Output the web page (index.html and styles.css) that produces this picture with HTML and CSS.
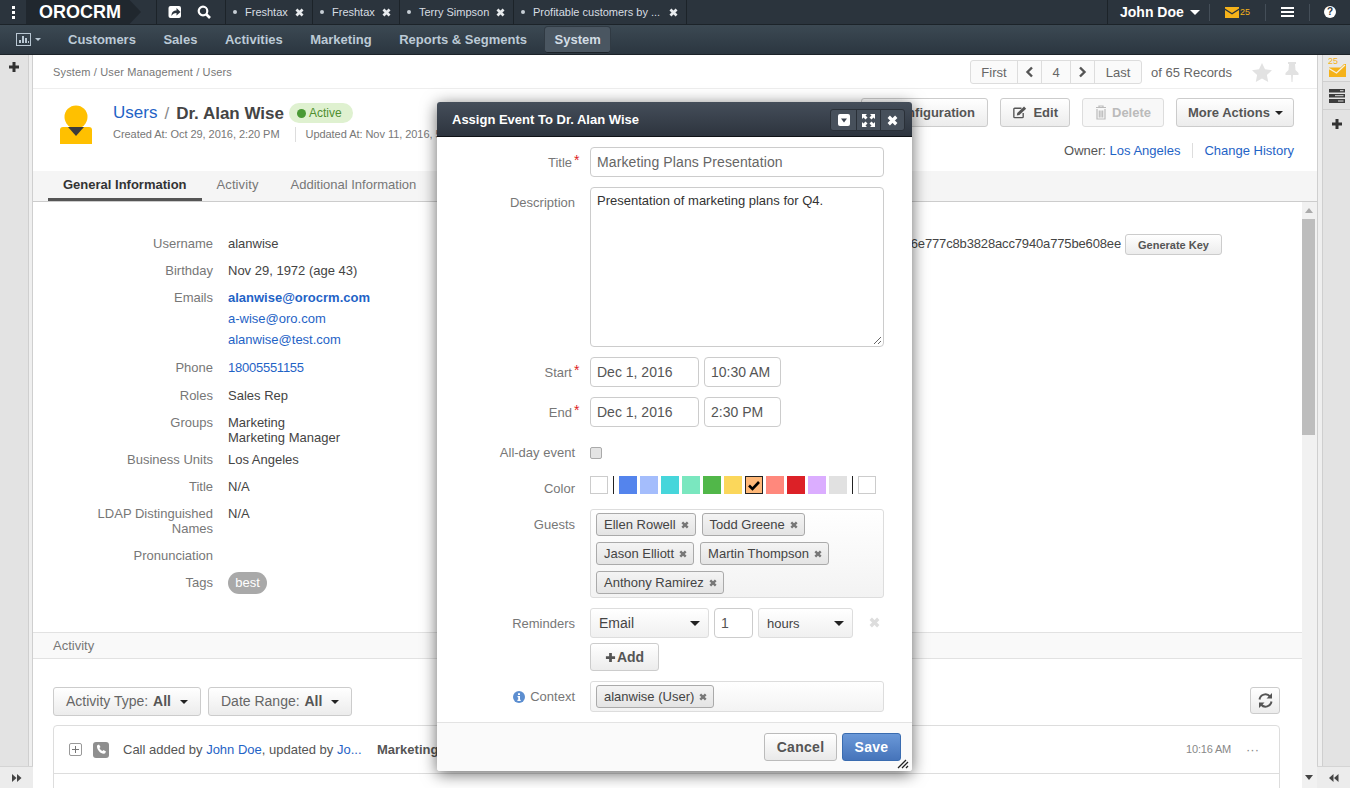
FILE: index.html
```html
<!DOCTYPE html>
<html lang="en">
<head>
<meta charset="utf-8">
<title>Dr. Alan Wise - Users</title>
<link rel="stylesheet" href="styles.css">
</head>
<body>
<svg class="sprite" aria-hidden="true">
  <symbol id="x" viewBox="0 0 10 10"><path d="M1.6 1.6l6.8 6.8M8.4 1.6L1.6 8.4" fill="none" stroke="currentColor" stroke-width="3"/></symbol>
  <symbol id="plus" viewBox="0 0 12 12"><path d="M6 1v10M1 6h10" fill="none" stroke="currentColor" stroke-width="3"/></symbol>
</svg>

<header class="topbar">
  <div class="dots"><i></i><i></i><i></i></div>
  <div class="logo">OROCRM</div>
  <div class="quick">
    <svg class="qi" viewBox="0 0 14 14"><rect x="0.5" y="1" width="12.5" height="12" rx="2" fill="#fff"/><path d="M3.5 11c0-4 2-5.500 5-5.500V3l4 4-4 3.500V8c-2.500 0-4 1-5 3z" fill="#2b343d"/></svg>
    <svg class="qi" viewBox="0 0 14 14"><circle cx="6" cy="6" r="4.300" fill="none" stroke="#fff" stroke-width="2.200"/><path d="M9 9l4 4" stroke="#fff" stroke-width="2.600"/></svg>
  </div>
  <div class="pin-tab t1"><span class="bullet"></span><span class="pin-name">Freshtax</span><svg class="pin-x"><use href="#x"/></svg></div>
  <div class="pin-tab t1"><span class="bullet"></span><span class="pin-name">Freshtax</span><svg class="pin-x"><use href="#x"/></svg></div>
  <div class="pin-tab t2"><span class="bullet"></span><span class="pin-name">Terry Simpson</span><svg class="pin-x"><use href="#x"/></svg></div>
  <div class="pin-tab t3"><span class="bullet"></span><span class="pin-name">Profitable customers by ...</span><svg class="pin-x"><use href="#x"/></svg></div>
  <div class="top-fill"></div>
  <div class="user-menu">
    <div class="user-name">John Doe<span class="caret caret-w"></span></div>
    <div class="top-cell mail">
      <svg width="14" height="11" viewBox="0 0 14 11"><path d="M0 0h14v1.500L7 6 0 1.500z" fill="#f5b21a"/><path d="M0 3l7 4.500L14 3v8H0z" fill="#f5b21a"/></svg><span class="mail-n">25</span>
    </div>
    <div class="top-cell burger"><i></i><i></i><i></i></div>
    <div class="top-cell help"><span>?</span></div>
  </div>
</header>

<nav class="navbar">
  <div class="nav-chart">
    <svg width="15" height="13" viewBox="0 0 15 13"><rect x="0.500" y="0.500" width="14" height="12" fill="none" stroke="#b9c7d3"/><path d="M3 10V7h2v3zM6 10V3h2v7zM9 10V5h2v5zM12 10V8h1v2z" fill="#b9c7d3"/></svg>
    <span class="caret caret-n"></span>
  </div>
  <a class="nav-item">Customers</a>
  <a class="nav-item">Sales</a>
  <a class="nav-item">Activities</a>
  <a class="nav-item">Marketing</a>
  <a class="nav-item">Reports &amp; Segments</a>
  <a class="nav-item nav-active">System</a>
</nav>

<div class="workspace">
  <aside class="rail rail-left">
    <div class="rail-col">
      <div class="rail-inner"><svg class="rail-plus"><use href="#plus"/></svg></div>
    </div>
    <div class="rail-foot">
      <svg width="10" height="8" viewBox="0 0 10 8"><path d="M0 0l4.500 4L0 8zM5 0l4.500 4L5 8z" fill="#444"/></svg>
    </div>
  </aside>

  <main class="main">
    <div class="crumbbar">
      <div class="crumbs">System / User Management / Users</div>
      <div class="pager-wrap">
        <div class="pager">
          <span class="pg pg-first">First</span>
          <span class="pg pg-arrow"><svg width="9" height="12" viewBox="0 0 9 12"><path d="M7 1.500L2.500 6 7 10.500" fill="none" stroke="#555" stroke-width="2.400"/></svg></span>
          <span class="pg pg-num">4</span>
          <span class="pg pg-arrow"><svg width="9" height="12" viewBox="0 0 9 12"><path d="M2 1.500L6.500 6 2 10.500" fill="none" stroke="#555" stroke-width="2.400"/></svg></span>
          <span class="pg pg-last">Last</span>
        </div>
        <span class="records">of 65 Records</span>
        <svg class="star" width="20" height="19" viewBox="0 0 20 19"><path d="M10 0l3 6.300 7 .9-5.100 4.800 1.300 6.900L10 15.600 3.800 18.900 5.100 12 0 7.200l7-.9z" fill="#e2e2e2"/></svg>
        <svg class="thumb" width="14" height="20" viewBox="0 0 14 20"><path d="M3 0h8v2h-1l.5 6 3 3v2H8l-.5 7h-1L6 13H.5v-2l3-3L4 2H3z" fill="#e2e2e2"/></svg>
      </div>
    </div>

    <section class="pagehead">
      <div class="who">
        <svg class="avatar" width="32" height="39" viewBox="0 0 32 39"><circle cx="16" cy="12" r="11.500" fill="#ffc000"/><path d="M3 22h26a3 3 0 0 1 3 3v14H0V25a3 3 0 0 1 3-3z" fill="#ffc000"/><path d="M8 22h16l-8 9z" fill="#3b3b3b"/></svg>
        <div class="who-text">
          <div class="who-title">
            <a class="link who-users">Users</a><span class="who-slash">/</span><span class="who-name">Dr. Alan Wise</span>
            <span class="status"><i></i>Active</span>
          </div>
          <div class="who-meta"><span>Created At: Oct 29, 2016, 2:20 PM</span><span class="meta-sep">Updated At: Nov 11, 2016, 5:15 PM</span></div>
        </div>
      </div>
      <div class="head-actions">
        <div class="btn-row">
          <a class="btn btn-config">Configuration</a>
          <a class="btn btn-edit"><svg width="17" height="15" viewBox="0 0 17 15"><path d="M12 8v4.500a1 1 0 0 1-1 1H2a1 1 0 0 1-1-1v-9a1 1 0 0 1 1-1h8" fill="none" stroke="#555" stroke-width="1.600"/><path d="M5 8l8-7.500 2.500 2.500L7.500 10.500 4.500 11z" fill="#555"/></svg>Edit</a>
          <a class="btn btn-delete"><svg width="12" height="15" viewBox="0 0 12 15"><path d="M1 2.500h10M4 2.500V1h4v1.500M2 4v10h8V4M4.300 5.500v7M6 5.500v7M7.700 5.500v7" fill="none" stroke="#bbb" stroke-width="1.200"/></svg>Delete</a>
          <a class="btn btn-more">More Actions<span class="caret caret-d"></span></a>
        </div>
        <div class="owner-row"><span>Owner: <a class="link">Los Angeles</a></span><a class="link owner-hist">Change History</a></div>
      </div>
    </section>

    <div class="tabs">
      <a class="tab tab-on">General Information</a>
      <a class="tab">Activity</a>
      <a class="tab tab-extra">Additional Information</a>
    </div>

    <div class="viewport">
      <div class="scroller">
        <section class="details">
          <div class="props">
            <div class="prop"><div class="k">Username</div><div class="v">alanwise</div></div>
            <div class="prop"><div class="k">Birthday</div><div class="v">Nov 29, 1972 (age 43)</div></div>
            <div class="prop prop-wide"><div class="k">Emails</div><div class="v mails"><a class="link mail-primary">alanwise@orocrm.com</a><a class="link">a-wise@oro.com</a><a class="link">alanwise@test.com</a></div></div>
            <div class="prop prop-wide"><div class="k">Phone</div><div class="v"><a class="link phone">18005551155</a></div></div>
            <div class="prop"><div class="k">Roles</div><div class="v">Sales Rep</div></div>
            <div class="prop prop-tight"><div class="k">Groups</div><div class="v">Marketing<br>Marketing Manager</div></div>
            <div class="prop"><div class="k">Business Units</div><div class="v">Los Angeles</div></div>
            <div class="prop"><div class="k">Title</div><div class="v">N/A</div></div>
            <div class="prop"><div class="k">LDAP Distinguished Names</div><div class="v">N/A</div></div>
            <div class="prop"><div class="k">Pronunciation</div><div class="v"></div></div>
            <div class="prop prop-last"><div class="k">Tags</div><div class="v"><span class="tagpill">best</span></div></div>
          </div>
          <div class="apikey"><span class="hash">6e777c8b3828acc7940a775be608ee</span><a class="btn-key">Generate Key</a></div>
        </section>
        <div class="section-head">Activity</div>
        <section class="activity">
          <div class="filter-row">
            <div class="filters">
              <a class="filter">Activity Type: <b>All</b><span class="caret caret-d"></span></a>
              <a class="filter">Date Range: <b>All</b><span class="caret caret-d"></span></a>
            </div>
            <a class="refresh"><svg width="15" height="15" viewBox="0 0 15 15"><path d="M1.500 6.500A6 6 0 0 1 12 3.500M13.500 8.500A6 6 0 0 1 3 11.500" fill="none" stroke="#555" stroke-width="2"/><path d="M14 0v5.500H8.500zM1 15V9.500h5.500z" fill="#555"/></svg></a>
          </div>
          <div class="timeline">
            <div class="tl-row">
              <svg class="tl-exp" width="13" height="13" viewBox="0 0 13 13"><rect x="0.500" y="0.500" width="12" height="12" rx="1.500" fill="none" stroke="#999"/><path d="M6.500 3v7M3 6.500h7" stroke="#777"/></svg>
              <span class="tl-ico"><svg width="11" height="11" viewBox="0 0 11 11"><path d="M1 1.500L3 .5l1.500 2.500-1 1c.5 1.200 1.500 2.300 3 3l1-1 2.500 1.500-1 2C5 10.500 .5 6 1 1.500z" fill="#fff"/></svg></span>
              <span class="tl-text">Call added by <a class="link">John Doe</a>, updated by <a class="link">Jo...</a></span>
              <b class="tl-subject">Marketing Plans Presentation</b>
              <span class="tl-time">10:16 AM</span>
              <span class="tl-more">···</span>
            </div>
          </div>
        </section>
      </div>
      <div class="scrollbar">
        <span class="sb-up"></span>
        <span class="sb-thumb"></span>
        <span class="sb-down"></span>
      </div>
    </div>
  </main>

  <aside class="rail rail-right">
    <div class="rail-col rail-col-r">
      <div class="rail-cell r-mail"><span class="r-n">25</span><svg width="17" height="13" viewBox="0 0 17 13"><path d="M0 3.500h11.500L15 0h2v13H0z" fill="#f5b21a"/><path d="M0 4.500l7.500 4.500L16 1" fill="none" stroke="#f6f0df" stroke-width="1.300"/></svg></div>
      <div class="rail-cell r-list"><svg width="16" height="14" viewBox="0 0 16 14"><path d="M0 0h16v3.500H0zM0 5h16v3.500H0zM0 10h16v4H0z" fill="#3d3d3d"/><path d="M11 1.700h3.500M6 6.700h8.500M9 12h5.500" stroke="#ddd" stroke-width="1"/></svg></div>
      <svg class="rail-plus r-plus"><use href="#plus"/></svg>
    </div>
    <div class="rail-foot">
      <svg width="10" height="8" viewBox="0 0 10 8"><path d="M4.500 0L0 4l4.500 4zM9.500 0L5 4l4.500 4z" fill="#444"/></svg>
    </div>
  </aside>
</div>

<div class="dialog">
  <div class="dlg-head">
    <span class="dlg-title">Assign Event To Dr. Alan Wise</span>
    <div class="dlg-tools">
      <span class="dlg-tool"><svg width="12" height="12" viewBox="0 0 12 12"><rect width="12" height="12" rx="2" fill="#fff"/><path d="M3 4.500h6L6 8.500z" fill="#3a434e"/></svg></span>
      <span class="dlg-tool"><svg width="13" height="13" viewBox="0 0 13 13"><path d="M0 0h5L3.500 1.500 5.500 3.500 3.500 5.500 1.500 3.500 0 5zM13 0v5L11.500 3.500 9.500 5.500 7.500 3.500 9.500 1.500 8 0zM0 13V8l1.500 1.500 2-2 2 2-2 2L5 13zM13 13H8l1.500-1.500-2-2 2-2 2 2L13 8z" fill="#fff"/></svg></span>
      <span class="dlg-tool dlg-close"><svg width="11" height="11"><use href="#x"/></svg></span>
    </div>
  </div>
  <div class="dlg-body">
    <div class="frow"><label class="flabel flabel-req">Title<em>*</em></label><div class="field f-text f-full f-title">Marketing Plans Presentation</div></div>
    <div class="frow"><label class="flabel">Description</label><div class="field f-full f-area">Presentation of marketing plans for Q4.<svg class="grip" width="9" height="9" viewBox="0 0 9 9"><path d="M1 8l7-7M5 8l3-3" stroke="#666"/></svg></div></div>
    <div class="frow"><label class="flabel flabel-req">Start<em>*</em></label><div class="pair"><div class="field f-text f-date">Dec 1, 2016</div><div class="field f-text f-time">10:30 AM</div></div></div>
    <div class="frow"><label class="flabel flabel-req">End<em>*</em></label><div class="pair"><div class="field f-text f-date">Dec 1, 2016</div><div class="field f-text f-time">2:30 PM</div></div></div>
    <div class="frow frow-allday"><label class="flabel">All-day event</label><span class="check"></span></div>
    <div class="frow frow-color"><label class="flabel">Color</label>
      <div class="swatches">
        <span class="sw sw-blank"></span><span class="sw-line"></span>
        <span class="sw c1"></span><span class="sw c2"></span><span class="sw c3"></span><span class="sw c4"></span><span class="sw c5"></span><span class="sw c6"></span>
        <span class="sw c7"><svg width="14" height="11" viewBox="0 0 14 11"><path d="M2 5.500l3.500 3.500L12 2" fill="none" stroke="#000" stroke-width="2.600"/></svg></span>
        <span class="sw c8"></span><span class="sw c9"></span><span class="sw c10"></span><span class="sw c11"></span>
        <span class="sw-line sw-line2"></span><span class="sw sw-blank"></span>
      </div>
    </div>
    <div class="frow"><label class="flabel">Guests</label>
      <div class="tagbox f-full">
        <span class="tag">Ellen Rowell<svg class="tag-x"><use href="#x"/></svg></span>
        <span class="tag">Todd Greene<svg class="tag-x"><use href="#x"/></svg></span>
        <span class="tag">Jason Elliott<svg class="tag-x"><use href="#x"/></svg></span>
        <span class="tag">Martin Thompson<svg class="tag-x"><use href="#x"/></svg></span>
        <span class="tag">Anthony Ramirez<svg class="tag-x"><use href="#x"/></svg></span>
      </div>
    </div>
    <div class="frow frow-rem"><label class="flabel">Reminders</label>
      <div class="rem">
        <div class="rem-line">
          <div class="sel sel-a">Email<span class="caret caret-s"></span></div>
          <div class="field f-text f-num">1</div>
          <div class="sel sel-b">hours<span class="caret caret-s"></span></div>
          <svg class="rem-x"><use href="#x"/></svg>
        </div>
        <a class="btn-add"><svg width="11" height="11"><use href="#plus"/></svg>Add</a>
      </div>
    </div>
    <div class="frow"><label class="flabel flabel-ctx"><svg width="12" height="12" viewBox="0 0 12 12"><circle cx="6" cy="6" r="6" fill="#5c8ed0"/><path d="M5 2.300h2v1.700H5zM4.500 5h2.500v3.700h.7V10H4.400V8.700h.8V6.200h-.7z" fill="#fff"/></svg>Context</label>
      <div class="tagbox f-full tagbox-ctx"><span class="tag">alanwise (User)<svg class="tag-x"><use href="#x"/></svg></span></div>
    </div>
  </div>
  <div class="dlg-foot">
    <a class="fbtn">Cancel</a>
    <a class="fbtn fbtn-save">Save</a>
    <svg class="dlg-grip" width="12" height="10" viewBox="0 0 12 10"><path d="M1 9l8-8M5 9l6-6M9 9l2-2" stroke="#222" stroke-width="1.300"/></svg>
  </div>
</div>
</body>
</html>
```

FILE: styles.css
```css
* { box-sizing: border-box; }
html, body { margin: 0; height: 100%; overflow: hidden; }
body {
  display: flex; flex-direction: column;
  font: 13px/15px "Liberation Sans", Arial, sans-serif;
  color: #444; background: #fff;
}
a { text-decoration: none; }
.sprite { display: none; }
.link { color: #1f63c6; }

/* carets */
.caret { display: inline-block; width: 0; height: 0; border-style: solid; border-color: currentColor transparent transparent; }
.caret-w { border-width: 5px 5px 0; margin-left: 6px; color: #fff; vertical-align: 2px; }
.caret-n { border-width: 3px 3px 0; margin-left: 4px; color: #b9c7d3; vertical-align: 3px; }
.caret-d { border-width: 4px 4px 0; margin-left: 5px; color: #222; vertical-align: 2px; }
.caret-s { border-width: 5px 5px 0; color: #222; }

/* top bar */
.topbar { height: 25px; flex: none; display: flex; background: #2b343d; border-bottom: 1px solid #1c2329; color: #fff; }
.dots { width: 26px; display: flex; flex-direction: column; align-items: center; justify-content: center; gap: 2px; }
.dots i { width: 3px; height: 3px; background: #fff; }
.logo { width: 115px; margin-right: 15px; padding-left: 13px; font: bold 18px/24px "Liberation Sans", sans-serif; background: #20272e; clip-path: polygon(0 0, 90% 0, 100% 50%, 90% 100%, 0 100%); }
.quick { width: 69px; display: flex; align-items: center; gap: 15px; padding-left: 11px; border-left: 1px solid #1c2329; }
.qi { width: 14px; height: 14px; }
.pin-tab { display: flex; align-items: center; border-left: 1px solid #1c2329; padding-left: 7px; font-size: 11px; color: #d8dde2; }
.t1 { width: 87px; } .t2 { width: 114px; } .t3 { width: 173px; }
.bullet { width: 4px; height: 4px; border-radius: 50%; background: #c7ced5; margin-right: 8px; }
.pin-name { flex: 1; white-space: nowrap; }
.pin-x { width: 9px; height: 9px; color: #e8ebee; margin-right: 8px; }
.top-fill { flex: 1; border-left: 1px solid #1c2329; }
.user-menu { width: 243px; display: flex; align-items: center; background: #2b343d; border-left: 1px solid #1c2329; }
.user-name { width: 101px; padding-left: 12px; font: bold 14px/24px "Liberation Sans", sans-serif; white-space: nowrap; }
.top-cell { height: 17px; border-left: 1px solid #444e58; display: flex; align-items: center; }
.mail { width: 56px; padding-left: 15px; }
.mail-n { font-size: 9px; color: #f5b21a; margin-left: 1px; }
.burger { width: 44px; flex-direction: column; justify-content: center; gap: 2px; }
.burger i { width: 13px; height: 2px; background: #fff; }
.help { width: 41px; justify-content: center; }
.help span { width: 12px; height: 12px; border-radius: 50%; background: #fff; color: #2b343d; font: bold 10px/12px "Liberation Sans", sans-serif; text-align: center; }

/* nav */
.navbar { height: 30px; flex: none; display: flex; align-items: center; background: linear-gradient(#3c4953, #2b3640); border-bottom: 1px solid #1c2329; padding-left: 16px; }
.nav-chart { width: 52px; display: flex; align-items: center; }
.nav-item { font: bold 13px/25px "Liberation Sans", sans-serif; color: #bccad6; margin-right: 27.5px; white-space: nowrap; }
.nav-item:nth-child(6) { margin-right: 18px; }
.nav-active { background: #4a5661; color: #d3dde5; padding: 0 9.5px; border-radius: 3px; border-bottom: 1px solid #1c2329; box-shadow: 0 0 0 1px #303a43; }

/* workspace */
.workspace { flex: 1; display: flex; min-height: 0; }
.rail { flex: none; display: flex; flex-direction: column; background: #e3e3e3; }
.rail-left { width: 33px; }
.rail-right { width: 33px; }
.rail-col { flex: 1; background: #efefef; border-right: 1px solid #cfcfcf; }
.rail-inner { width: 29px; height: 100%; background: #e3e3e3; border-right: 1px solid #cfcfcf; padding-top: 6px; text-align: center; }
.rail-plus { display: block; width: 12px; height: 12px; color: #333; }
.rail-inner .rail-plus { margin-left: 8px; }
.rail-foot { height: 22px; flex: none; background: #ececec; border-top: 1px solid #d4d4d4; display: flex; align-items: center; justify-content: center; }
.rail-col-r { border-right: 0; border-left: 1px solid #cfcfcf; background: #e3e3e3; box-shadow: inset 4px 0 0 #efefef, inset 5px 0 0 #cfcfcf; padding-left: 5px; }
.rail-cell { height: 27px; border-bottom: 1px solid #cfcfcf; display: flex; align-items: center; justify-content: center; position: relative; }
.r-mail { height: 27px; background: #e8e8e8; padding-top: 4px; padding-left: 2px; }
.r-n { position: absolute; left: 5px; top: 1px; font-size: 9px; line-height: 10px; color: #f5b21a; }
.r-list { height: 28px; }
.r-plus { margin: 8px 0 0 8px; }

.main { flex: 1; min-width: 0; display: flex; flex-direction: column; }
.crumbbar { height: 34px; flex: none; border-bottom: 1px solid #eee; display: flex; justify-content: space-between; align-items: flex-start; padding: 5px 15px 0 20px; }
.crumbs { font-size: 11px; line-height: 15px; margin-top: 5px; color: #777; letter-spacing: .15px; }
.pager-wrap { display: flex; align-items: center; }
.pager { display: flex; height: 24px; border: 1px solid #ddd; border-radius: 3px; background: #fafafa; color: #666; margin-right: 9px; }
.pg { display: flex; align-items: center; justify-content: center; border-left: 1px solid #ddd; }
.pg:first-child { border-left: 0; }
.pg-first { width: 46px; } .pg-arrow { width: 24px; } .pg-num { width: 29px; } .pg-last { width: 47px; }
.records { color: #666; margin-right: 20px; width: 81px; white-space: nowrap; }
.star { margin-right: 13px; }
.thumb { margin-right: 3px; }

.pagehead { height: 82px; flex: none; display: flex; justify-content: space-between; padding: 16px 23px 0 27px; }
.who { display: flex; }
.avatar { flex: none; }
.who-text { margin: -2px 0 0 21px; }
.who-title { display: flex; align-items: center; height: 20px; white-space: nowrap; }
.who-users { font-size: 17px; line-height: 20px; }
.who-slash { font-size: 17px; color: #888; margin: 0 7px; }
.who-name { font-size: 17px; font-weight: bold; color: #444; }
.status { margin-left: 5px; height: 20px; width: 64px; border-radius: 10px; background: #dff1d0; color: #4f8f2f; font-size: 12px; line-height: 20px; display: flex; align-items: center; padding-left: 8px; }
.status i { width: 9px; height: 9px; border-radius: 50%; background: #4a9a35; margin-right: 3px; }
.who-meta { margin-top: 4px; font-size: 11px; color: #777; white-space: nowrap; display: flex; letter-spacing: -.05px; }
.meta-sep { border-left: 1px solid #ddd; margin-left: 15px; padding-left: 10px; }
.head-actions { display: flex; flex-direction: column; align-items: flex-end; margin-top: -7px; }
.btn-row { display: flex; gap: 12px; }
.btn { height: 29px; padding: 0 11px; border: 1px solid #ccc; border-radius: 3px; background: linear-gradient(#fff, #ececec); color: #555; font-weight: bold; display: flex; align-items: center; white-space: nowrap; }
.btn-config { width: 127px; justify-content: flex-end; padding-right: 12px; }
.btn-edit { width: 70px; gap: 6px; padding-left: 12px; }
.btn-delete { width: 82px; gap: 5px; padding-left: 12px; color: #bbb; border-color: #ddd; background: #f8f8f8; }
.btn-more { width: 118px; }
.owner-row { margin-top: 16px; display: flex; color: #555; }
.owner-hist { border-left: 1px solid #ddd; margin-left: 12px; padding-left: 11px; }

.tabs { height: 31px; flex: none; display: flex; background: #f5f5f5; border-bottom: 1px solid #ccc; padding-left: 15px; }
.tab { padding: 6px 15px 0; color: #777; height: 30px; white-space: nowrap; letter-spacing: .1px; }
.tab-on { font-weight: bold; color: #333; border-bottom: 3px solid #555; letter-spacing: 0; }
.tab-extra { margin-left: 2px; letter-spacing: 0; }

.viewport { flex: 1; min-height: 0; display: flex; }
.scroller { flex: 1; min-width: 0; overflow: hidden; }
.details { display: flex; justify-content: space-between; padding-right: 80px; padding-top: 34px; }
.prop { display: flex; margin-bottom: 12px; }
.prop-wide { margin-bottom: 13px; }
.prop-tight { margin-bottom: 7px; }
.prop-last { margin-bottom: 42px; }
.k { width: 180px; padding-left: 40px; text-align: right; color: #777; }
.v { margin-left: 15px; color: #444; }
.mails { display: flex; flex-direction: column; gap: 6px; }
.mail-primary { font-weight: bold; }
.phone { letter-spacing: -.25px; }
.tagpill { display: inline-block; margin: -4px 0; height: 22px; line-height: 22px; width: 39px; text-align: center; border-radius: 11px; background: #a9a9a9; color: #fff; }
.apikey { display: flex; align-items: flex-start; gap: 4px; white-space: nowrap; color: #444; }
.hash { letter-spacing: -.15px; }
.btn-key { margin-top: -2px; width: 97px; height: 21px; border: 1px solid #ccc; border-radius: 3px; background: linear-gradient(#fff, #ececec); color: #555; font-size: 11px; font-weight: bold; line-height: 20px; text-align: center; }
.section-head { height: 27px; border-top: 1px solid #e2e2e2; border-bottom: 1px solid #e2e2e2; background: #f9f9f9; padding: 5px 0 0 20px; color: #777; }
.activity { padding: 28px 22px 0 20px; }
.filter-row { display: flex; justify-content: space-between; }
.filters { display: flex; gap: 7px; }
.filter { height: 29px; padding: 0 12px; border: 1px solid #ccc; border-radius: 3px; background: linear-gradient(#fff, #ececec); color: #666; font-size: 14px; line-height: 27px; white-space: nowrap; }
.filter b { color: #555; margin-left: 1px; }
.filter .caret { margin-left: 9px; }
.refresh { width: 30px; height: 27px; border: 1px solid #ccc; border-radius: 3px; background: linear-gradient(#fff, #ececec); display: flex; align-items: center; justify-content: center; }
.timeline { margin-top: 9px; height: 80px; border: 1px solid #ddd; border-radius: 4px 4px 0 0; }
.tl-row { height: 48px; border-bottom: 1px solid #ddd; display: flex; align-items: center; padding: 0 20px 0 15px; white-space: nowrap; color: #555; font-size: 13px; overflow: hidden; }
.tl-exp { flex: none; margin-right: 11px; }
.tl-ico { flex: none; width: 16px; height: 16px; border-radius: 3px; background: #8f8f8f; display: flex; align-items: center; justify-content: center; margin-right: 14px; }
.tl-text { width: 254px; flex: none; }
.tl-subject { flex: 1; font-size: 13px; color: #555; }
.tl-time { font-size: 11px; letter-spacing: -.2px; color: #888; margin-right: 15px; }
.tl-more { color: #888; }

.scrollbar { width: 15px; flex: none; background: #f1f1f1; position: relative; display: flex; flex-direction: column; align-items: stretch; }
.sb-up { height: 17px; flex: none; margin: 6px 0 0 0; }
.sb-up::before { content: ""; display: block; width: 0; height: 0; margin: 0 auto; transform: translateX(-1px); border: 4px solid transparent; border-top: 0; border-bottom: 5px solid #aaa; }
.sb-thumb { width: 13px; height: 216px; flex: none; background: #bdbdbd; margin-top: -6px; }
.sb-down { margin-top: auto; margin-bottom: 8px; height: 5px; }
.sb-down::before { content: ""; display: block; width: 0; height: 0; margin: 0 auto; transform: translateX(-1px); border: 4px solid transparent; border-bottom: 0; border-top: 5px solid #444; }

/* dialog */
.dialog { position: absolute; left: 437px; top: 102px; width: 475px; background: #fff; border-radius: 3px; box-shadow: 0 3px 16px rgba(0,0,0,.6); }
.dlg-head { height: 35px; display: flex; justify-content: space-between; background: linear-gradient(#454e5a, #2d343e); border-bottom: 1px solid #0f1216; border-radius: 3px 3px 0 0; padding: 7px 7px 0 15px; }
.dlg-title { font-weight: bold; color: #fff; margin-top: 3px; white-space: nowrap; }
.dlg-tools { display: flex; height: 22px; border: 1px solid #2a3038; border-radius: 3px; background: #47505b; }
.dlg-tool { width: 24px; border-left: 1px solid #2a3038; display: flex; align-items: center; justify-content: center; }
.dlg-tool:first-child { border-left: 0; width: 25px; }
.dlg-close { color: #fff; }
.dlg-body { padding-top: 10px; height: 585px; }
.frow { display: flex; margin-bottom: 10px; font-size: 14px; }
.flabel { width: 138px; margin-right: 15px; text-align: right; color: #777; font-size: 13px; padding-top: 8px; position: relative; white-space: nowrap; }
.flabel-req { padding-right: 3px; }
.flabel em { position: absolute; left: 137px; top: 6px; color: #d22; font-style: normal; font-size: 14px; }
.field { border: 1px solid #ccc; border-radius: 4px; color: #555; background: #fff; }
.f-full { width: 294px; }
.f-text { height: 30px; padding: 0 6px; line-height: 28px; white-space: nowrap; }
.f-title { color: #666; letter-spacing: .1px; }
.f-area { height: 160px; padding: 5px 6px; position: relative; color: #333; font-size: 13px; line-height: 16px; }
.grip { position: absolute; right: 1px; bottom: 1px; }
.pair { display: flex; gap: 5px; }
.f-date { width: 109px; }
.f-time { width: 77px; }
.frow-allday { height: 23px; }
.check { width: 12px; height: 12px; margin-top: 10px; border: 1px solid #aaa; border-radius: 2px; background: #e4e4e4; }
.frow-color { height: 29px; }
.frow-color .flabel { padding-top: 11px; }
.swatches { display: flex; padding-top: 6px; gap: 3px; }
.sw { width: 18px; height: 18px; display: flex; align-items: center; justify-content: center; }
.sw-blank { border: 1px solid #ccc; background: #fff; }
.sw-line { width: 1px; height: 18px; background: #222; margin: 0 2px; }
.sw-line2 { margin: 0 2px; }
.c1 { background: #5484ed; } .c2 { background: #a4bdfc; } .c3 { background: #46d6db; } .c4 { background: #7ae7bf; }
.c5 { background: #51b749; } .c6 { background: #fbd75b; } .c7 { background: #ffb878; border: 1px solid #222; }
.c8 { background: #ff887c; } .c9 { background: #dc2127; } .c10 { background: #dbadff; } .c11 { background: #e1e1e1; }
.tagbox { border: 1px solid #ddd; border-radius: 3px; background: linear-gradient(#fff, #f3f3f3); padding: 3px 5px; display: flex; flex-wrap: wrap; gap: 6px 6px; height: 89px; align-content: flex-start; }
.tagbox-ctx { height: 31px; }
.tag { height: 23px; border: 1px solid #aaa; border-radius: 3px; background: linear-gradient(#f4f4f4, #e4e4e4); color: #444; padding: 0 6px 0 7px; display: flex; align-items: center; font-size: 13px; white-space: nowrap; }
.tag-x { width: 8px; height: 8px; color: #777; margin-left: 5px; }
.frow-rem { height: 63px; }
.rem-line { display: flex; gap: 5px; align-items: flex-start; }
.sel { height: 30px; border: 1px solid #ddd; border-radius: 3px; background: linear-gradient(#fff, #f0f0f0); color: #444; display: flex; align-items: center; justify-content: space-between; padding: 0 8px; }
.sel-a { width: 119px; }
.sel-b { width: 95px; font-size: 13px; }
.f-num { width: 39px; }
.rem-x { width: 11px; height: 11px; color: #ddd; margin: 9px 0 0 11px; }
.btn-add { margin-top: 5px; width: 69px; height: 28px; border: 1px solid #ccc; border-radius: 3px; background: linear-gradient(#fff, #ececec); color: #555; font-weight: bold; display: flex; align-items: center; justify-content: center; gap: 1px; }
.btn-add svg { color: #555; }
.flabel-ctx { padding-top: 8px; display: flex; align-items: flex-start; justify-content: flex-end; }
.flabel-ctx svg { margin: 2px 5px 0 0; }
.dlg-foot { height: 49px; border-top: 1px solid #e3e3e3; background: #fafafa; display: flex; justify-content: flex-end; gap: 5px; padding: 10px 11px 0 0; position: relative; border-radius: 0 0 3px 3px; }
.fbtn { height: 28px; width: 73px; border: 1px solid #bbb; border-radius: 3px; background: linear-gradient(#fff, #e9e9e9); color: #555; font-weight: bold; font-size: 14px; line-height: 26px; text-align: center; letter-spacing: .3px; }
.fbtn-save { width: 59px; border-color: #3a6cb0; background: linear-gradient(#6a98d8, #4674ba); color: #fff; }
.dlg-grip { position: absolute; right: 3px; bottom: 2px; }
```
